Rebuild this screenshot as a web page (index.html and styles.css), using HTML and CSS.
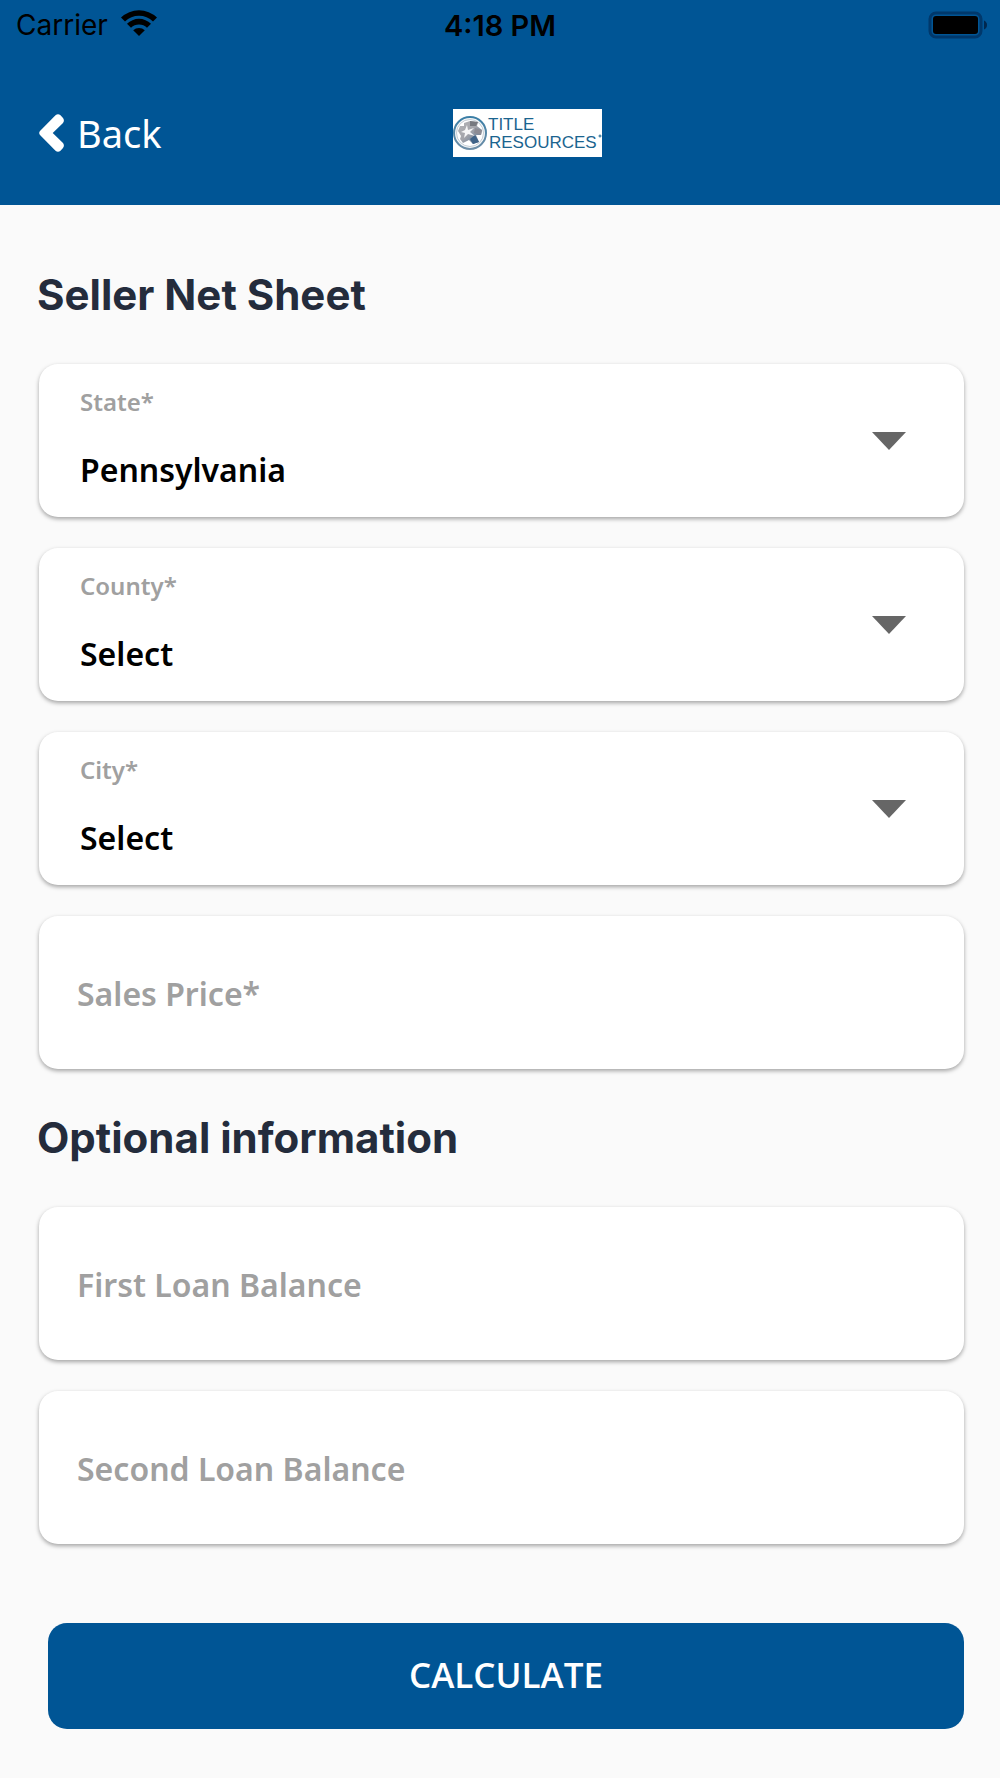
FILE: index.html
```html
<!DOCTYPE html>
<html lang="en">
    <head>
        <meta charset="utf-8">
        <meta name="viewport" content="width=device-width, initial-scale=1.0">
        <title>Seller Net Sheet</title>
        <link rel="stylesheet" href="styles.css">
    </head>
    <body>

        <header class="header">
            <div class="statusbar">
                <div class="carrier">
                    <span>Carrier</span>
                    <svg class="wifi" width="38" height="28" viewBox="0 0 38 28" aria-hidden="true">
                        <path d="M1 8.500A26 26 0 0 1 37 8.500L33 12.500A20 20 0 0 0 5 12.500Z"/>
                        <path d="M7 14.800A17 17 0 0 1 31 14.800L27 18.700A11.500 11.500 0 0 0 11 18.700Z"/>
                        <path d="M13.200 21.300A8.500 8.500 0 0 1 24.800 21.300L19 27Z"/>
                    </svg>
                </div>
                <div class="clock">4:18 PM</div>
                <svg class="battery" width="60" height="28" viewBox="0 0 60 28" aria-hidden="true">
                    <rect x="2" y="2" width="51" height="24" rx="6" fill="none" stroke="#00386b" stroke-width="3"/>
                    <rect x="5" y="5" width="45" height="18" rx="3"/>
                    <path d="M56 9.500Q59 11 59 14T56 18.500Z" fill="#00284f"/>
                </svg>
            </div>
            <nav class="navbar">
                <a class="back" href="#">
                    <svg width="26" height="38" viewBox="0 0 26 38" aria-hidden="true">
                        <path d="M1 17L16.500 1.300Q19 -0.700 21.500 1.300L24 4Q25.800 6.500 24 9L13.700 19L24 29Q25.800 31.500 24 34L21.500 36.700Q19 38.700 16.500 36.700L1 21Q-0.600 19 1 17Z" fill="#fff"/>
                    </svg>
                    <span>Back</span>
                </a>
                <svg class="logo" width="149" height="48" viewBox="0 0 149 48" role="img" aria-label="Title Resources">
                    <defs>
                        <linearGradient id="globe" x1="0" y1="0" x2="1" y2="1">
                            <stop offset="0" stop-color="#b4b5b8"/>
                            <stop offset="0.500" stop-color="#a3a4aa"/>
                            <stop offset="1" stop-color="#4f6f92"/>
                        </linearGradient>
                        <linearGradient id="ring" x1="0" y1="0" x2="0" y2="1">
                            <stop offset="0" stop-color="#3a7ea6"/>
                            <stop offset="1" stop-color="#6f8fa8"/>
                        </linearGradient>
                    </defs>
                    <rect width="149" height="48" fill="#fff"/>
                    <circle cx="17" cy="24" r="16" fill="#f4f6f8" stroke="url(#ring)" stroke-width="2"/>
                    <circle cx="17" cy="24" r="13.500" fill="#fff" stroke="#c3ccd4"/>
                    <path d="M11 14L17 12L25 13L24 17L29 21L28 26L23 26L26 33L20 35L16 31L10 34L7 30L8 27L5 22L7 17L11 17Z" fill="url(#globe)"/>
                    <path d="M17 12L25 13L23 17L17 17Z" fill="#77797f"/>
                    <path d="M17 30L22 26L26 33L20 35Z" fill="#3f6388"/>
                    <path d="M22 19L29 21L28 26L21 24Z" fill="#8d8c94"/>
                    <path d="M14 16L15 21L21 19L17 23L22 27L15 25L11 29L12 24L8 23L12 21Z" fill="#fff" opacity="0.900"/>
                    <text class="logotext" x="35" y="21">TITLE</text>
                    <text class="logotext" x="36" y="39">RESOURCES</text>
                    <circle cx="147" cy="27" r="1" fill="none" stroke="#1b648f"/>
                </svg>
            </nav>
        </header>

        <main class="content">
            <form>
                <h1 class="title">Seller Net Sheet</h1>
                <div class="fields">
                    <div class="card">
                        <div class="choice">
                            <label for="State">State*</label>
                            <select id="State"><option>Pennsylvania</option></select>
                        </div>
                        <svg class="arrow" width="34" height="18" viewBox="0 0 34 18" aria-hidden="true"><path d="M0 0H34L17 18Z"/></svg>
                    </div>
                    <div class="card">
                        <div class="choice">
                            <label for="County">County*</label>
                            <select id="County"><option>Select</option></select>
                        </div>
                        <svg class="arrow" width="34" height="18" viewBox="0 0 34 18" aria-hidden="true"><path d="M0 0H34L17 18Z"/></svg>
                    </div>
                    <div class="card">
                        <div class="choice">
                            <label for="City">City*</label>
                            <select id="City"><option>Select</option></select>
                        </div>
                        <svg class="arrow" width="34" height="18" viewBox="0 0 34 18" aria-hidden="true"><path d="M0 0H34L17 18Z"/></svg>
                    </div>
                    <input class="card amount" id="SalesPrice" type="text" inputmode="decimal" placeholder="Sales Price*" aria-label="Sales Price">
                </div>

                <h2 class="title">Optional information</h2>
                <div class="fields">
                    <input class="card amount" id="FirstLoan" type="text" inputmode="decimal" placeholder="First Loan Balance" aria-label="First Loan Balance">
                    <input class="card amount" id="SecondLoan" type="text" inputmode="decimal" placeholder="Second Loan Balance" aria-label="Second Loan Balance">
                </div>

                <button class="calculate" type="button">CALCULATE</button>
            </form>
        </main>

    </body>
</html>
```
FILE: styles.css
```css
*
{
    box-sizing: border-box;
}

body
{
    margin: 0;
    background-color: #fafafa;
    color: #000000;
    font-family: "Noto Sans", "Open Sans", sans-serif;
}

/* Header */
.header
{
    background-color: #005595;
}
.statusbar
{
    display: grid;
    grid-template-columns: 1fr auto 1fr;
    align-items: center;
    height: 50px;
    padding: 0 12px;
    font: 28px Inter, sans-serif;
}
.carrier
{
    display: flex;
    align-items: center;
    gap: 12px;
    padding-left: 4px;
}
.wifi
{
    margin-bottom: 4px;
}
.clock
{
    font-size: 29px;
    font-weight: 600;
}
.battery
{
    justify-self: end;
}
.navbar
{
    display: grid;
    grid-template-columns: 1fr auto 1fr;
    align-items: center;
    height: 155px;
    padding: 10px 39px 0;
}
.back
{
    display: flex;
    align-items: center;
    gap: 12px;
    color: #ffffff;
    font-size: 38px;
    line-height: 48px;
    text-decoration: none;
}
.logo
{
    margin-left: 54px;
}
.logotext
{
    fill: #1b648f;
    font: 17px "Liberation Sans", Arial, sans-serif;
}

/* Form */
.content
{
    padding: 62px 36px 49px 39px;
}
.title
{
    margin: 0 0 41px -2px;
    color: #242c3c;
    font: 700 42px/56px Inter, sans-serif;
}
.fields
{
    display: flex;
    flex-direction: column;
    gap: 31px;
}
.fields + .title
{
    margin-top: 41px;
}
.card
{
    display: flex;
    align-items: center;
    width: 100%;
    height: 153px;
    padding: 0 58px 0 41px;
    border: 0;
    border-radius: 19px;
    background-color: #ffffff;
    box-shadow: 0 2px 4px rgba(0,0,0,0.35);
}
.choice
{
    display: flex;
    flex: 1;
    flex-direction: column;
    gap: 29px;
    padding-bottom: 4px;
}
.choice label
{
    color: #a0a0a0;
    font-size: 24px;
    font-weight: 600;
    line-height: 32px;
}
.choice select
{
    appearance: none;
    width: 100%;
    height: 44px;
    padding: 0;
    border: 0;
    background: none;
    color: #000000;
    font: 600 32px "Noto Sans", "Open Sans", sans-serif;
}
.arrow
{
    fill: #666666;
}
.amount
{
    padding-top: 2px;
    padding-left: 38px;
    color: #000000;
    font: 600 32px "Noto Sans", "Open Sans", sans-serif;
}
.amount::placeholder
{
    color: #a0a0a0;
    opacity: 1;
}
.calculate
{
    display: block;
    width: calc(100% - 9px);
    height: 106px;
    margin: 79px 0 0 9px;
    padding: 0 0 4px;
    border: 0;
    border-radius: 19px;
    background-color: #005595;
    color: #ffffff;
    font: 600 35px "Open Sans", "Noto Sans", sans-serif;
}
```
